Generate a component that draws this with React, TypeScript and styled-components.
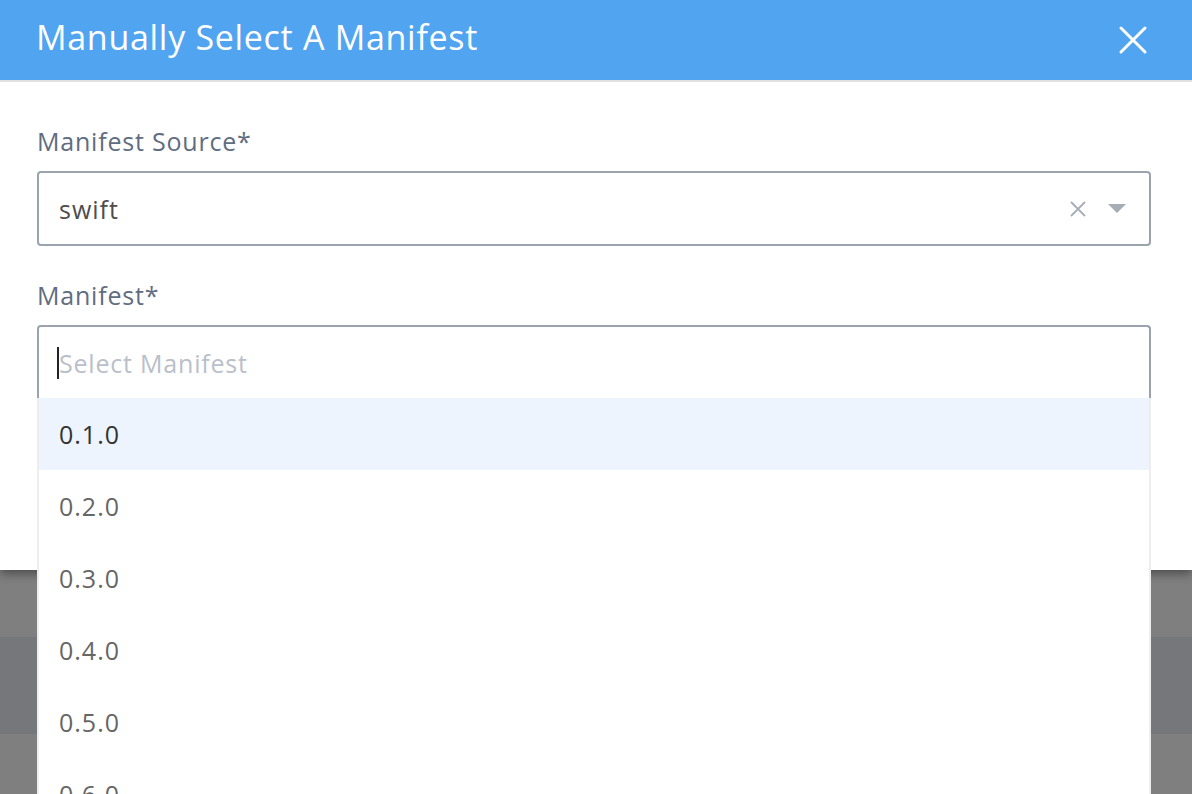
import * as React from "react";
import styled, { createGlobalStyle } from "styled-components";

const fontStack = `"Open Sans", "Noto Sans", "Liberation Sans", sans-serif`;

const GlobalStyle = createGlobalStyle`
  html, body {
    margin: 0;
    padding: 0;
    overflow: hidden;
    font-family: ${fontStack};
  }
  * { box-sizing: border-box; }
`;

const Page = styled.div`
  position: relative;
  width: 1192px;
  height: 794px;
  overflow: hidden;
  background: #ffffff;
`;

// the page that sits under the modal backdrop
const UnderPage = styled.div`
  display: flex;
  flex-direction: column;
  height: 100%;
`;

const UnderRow = styled.div<{ $height: number; $shade?: boolean }>`
  flex: 0 0 ${(p) => p.$height}px;
  display: flex;
  align-items: flex-end;
  background: ${(p) => (p.$shade ? "#eceef4" : "#ffffff")};
`;

const UnderLink = styled.span`
  color: #3f9ef5;
  font-size: 24px;
  line-height: 24px;
  margin-left: -2px;
  margin-bottom: -8px;
`;

const Backdrop = styled.div`
  position: absolute;
  inset: 0;
  background: rgba(0, 0, 0, 0.5);
  z-index: 1;
`;

const Dialog = styled.div`
  position: absolute;
  top: 0;
  left: 0;
  right: 0;
  height: 570px;
  background: #ffffff;
  box-shadow: 0 3px 10px rgba(0, 0, 0, 0.45);
  z-index: 2;
  display: flex;
  flex-direction: column;
`;

const Header = styled.div`
  flex: 0 0 82px;
  display: flex;
  align-items: center;
  justify-content: space-between;
  padding: 0 44px 6px 36px;
  background: #51a5f0;
  border-bottom: 2px solid #e1e1e1;
`;

const Title = styled.h1`
  margin: 0;
  color: #ffffff;
  font-size: 34px;
  font-weight: 400;
  letter-spacing: 0.7px;
`;

const CloseButton = styled.button`
  display: flex;
  padding: 0;
  margin-top: 6px;
  border: 0;
  background: none;
  cursor: pointer;
`;

const Body = styled.div`
  display: flex;
  flex-direction: column;
  padding: 43px 41px 0 37px;
`;

const Field = styled.div`
  display: flex;
  flex-direction: column;
  gap: 14px;
  margin-bottom: 33px;
`;

const Label = styled.label`
  color: #5f6d80;
  font-size: 25px;
  line-height: 32px;
  letter-spacing: 0.8px;
`;

const Control = styled.div<{ $open?: boolean }>`
  position: relative;
  flex: 0 0 75px;
  display: flex;
  align-items: center;
  padding: 0 20px;
  border: 2px solid #9aa3ae;
  border-bottom-color: ${(p) => (p.$open ? "transparent" : "#9aa3ae")};
  border-radius: ${(p) => (p.$open ? "4px 4px 0 0" : "4px")};
  background: #ffffff;
`;

const Value = styled.span`
  flex: 1;
  color: #4d4d4d;
  font-size: 25px;
  letter-spacing: 1px;
`;

const Placeholder = styled.span`
  flex: 1;
  display: flex;
  align-items: center;
  color: #b9c0ca;
  font-size: 25px;
  letter-spacing: 0.8px;
`;

const Caret = styled.span`
  width: 2px;
  height: 32px;
  margin-left: -2px;
  background: #222;
`;

const Indicators = styled.div`
  display: flex;
  align-items: center;
  gap: 20px;
  margin-right: 2px;
`;

const Menu = styled.ul`
  position: absolute;
  top: 100%;
  left: -2px;
  right: -2px;
  margin: 0;
  padding: 0;
  list-style: none;
  background: #ffffff;
  border-left: 2px solid #eeeeee;
  border-right: 2px solid #eeeeee;
  z-index: 3;
`;

const Option = styled.li<{ $active?: boolean }>`
  height: 72px;
  display: flex;
  align-items: center;
  padding-left: 20px;
  font-size: 25px;
  letter-spacing: 1px;
  color: ${(p) => (p.$active ? "#333333" : "#666666")};
  background: ${(p) => (p.$active ? "#edf4fe" : "#ffffff")};
`;

const CloseIcon = () => (
  <svg width="30" height="30" viewBox="0 0 30 30">
    <path d="M3 3 L27 27 M27 3 L3 27" stroke="#ffffff" strokeWidth="3" strokeLinecap="round" />
  </svg>
);

const ClearIcon = () => (
  <svg width="18" height="18" viewBox="0 0 18 18">
    <path d="M2 2 L16 16 M16 2 L2 16" stroke="#a6adb7" strokeWidth="1.8" />
  </svg>
);

const DownIcon = () => (
  <svg width="20" height="10" viewBox="0 0 20 10">
    <path d="M1 0 L19 0 L10 9 Z" fill="#a6adb7" />
  </svg>
);

const versions = ["0.1.0", "0.2.0", "0.3.0", "0.4.0", "0.5.0", "0.6.0"];

export default function App() {
  return (
    <Page>
      <GlobalStyle />
      <UnderPage>
        <UnderRow $height={566}>
          <UnderLink>g</UnderLink>
        </UnderRow>
        <UnderRow $height={71} />
        <UnderRow $height={97} $shade />
        <UnderRow $height={60} />
      </UnderPage>
      <Backdrop />
      <Dialog>
        <Header>
          <Title>Manually Select A Manifest</Title>
          <CloseButton aria-label="close">
            <CloseIcon />
          </CloseButton>
        </Header>
        <Body>
          <Field>
            <Label>Manifest Source*</Label>
            <Control>
              <Value>swift</Value>
              <Indicators>
                <ClearIcon />
                <DownIcon />
              </Indicators>
            </Control>
          </Field>
          <Field>
            <Label>Manifest*</Label>
            <Control $open>
              <Placeholder>
                <Caret />
                Select Manifest
              </Placeholder>
              <Menu>
                {versions.map((v, i) => (
                  <Option key={v} $active={i === 0}>
                    {v}
                  </Option>
                ))}
              </Menu>
            </Control>
          </Field>
        </Body>
      </Dialog>
    </Page>
  );
}
